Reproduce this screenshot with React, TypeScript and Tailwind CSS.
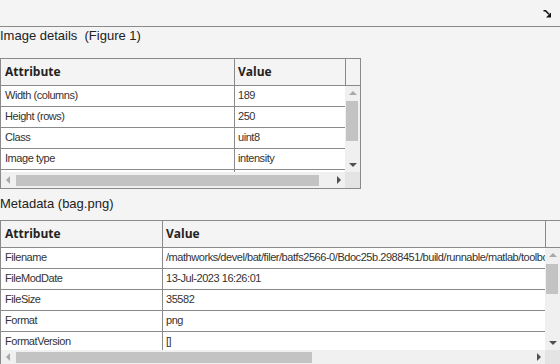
import React from 'react';

const font = { fontFamily: '"Liberation Sans", Arial, sans-serif' };
const headFont = { fontFamily: '"Open Sans", "Noto Sans", sans-serif' };

type Row = [string, string];

// last row of the first table only peeks out 3px under the header lines
const imageRows: Row[] = [
    ['Width (columns)', '189'],
    ['Height (rows)', '250'],
    ['Class', 'uint8'],
    ['Image type', 'intensity'],
    ['', ''],
];

const metaRows: Row[] = [
    ['Filename', '/mathworks/devel/bat/filer/batfs2566-0/Bdoc25b.2988451/build/runnable/matlab/toolbox/images/imdata/bag.png'],
    ['FileModDate', '13-Jul-2023 16:26:01'],
    ['FileSize', '35582'],
    ['Format', 'png'],
    ['FormatVersion', '[]'],
];

function UpArrow() {
    return <div className="w-0 h-0 border-l-[4px] border-r-[4px] border-b-[4px] border-l-transparent border-r-transparent border-b-[#a8a8a8]" />;
}
function DownArrow() {
    return <div className="w-0 h-0 border-l-[4px] border-r-[4px] border-t-[4px] border-l-transparent border-r-transparent border-t-[#505050]" />;
}
function LeftArrow() {
    return <div className="w-0 h-0 border-t-[4px] border-b-[4px] border-r-[4px] border-t-transparent border-b-transparent border-r-[#a8a8a8]" />;
}
function RightArrow() {
    return <div className="w-0 h-0 border-t-[4px] border-b-[4px] border-l-[4px] border-t-transparent border-b-transparent border-l-[#505050]" />;
}

function DataTable({
    rows, width, attrW, valueW, bodyH, thumbTop, thumbH, hThumbW, hBarH,
}: {
    rows: Row[]; width: string; attrW: string; valueW: string; bodyH: string;
    thumbTop: string; thumbH: string; hThumbW: string; hBarH: string;
}) {
    return (
        <div className={`${width} border border-[#8a8a8a] bg-[#f4f4f4] flex flex-col shrink-0`}>
            {/* header */}
            <div className="flex h-[27px] border-b border-[#8a8a8a] text-[12px] font-bold text-[#222]" style={headFont}>
                <div className={`${attrW} shrink-0 border-r border-[#8a8a8a] pl-1 pt-[5px] leading-[16px]`}>Attribute</div>
                <div className={`${valueW} shrink-0 border-r border-[#8a8a8a] pl-[3px] pt-[5px] leading-[16px]`}>Value</div>
                <div className="flex-1" />
            </div>
            {/* body */}
            <div className={`flex ${bodyH}`}>
                <div className="flex-1 overflow-hidden bg-[#f4f4f4]">
                    {rows.map(([a, v], i) => (
                        <div key={i} className="flex h-[21px] bg-white border-b border-[#8a8a8a] text-[11px] tracking-[-0.45px] text-[#333] leading-[18px]" style={font}>
                            <div className={`${attrW} shrink-0 border-r border-[#8a8a8a] pl-1 truncate`}>{a}</div>
                            <div className="flex-1 pl-[3px] whitespace-nowrap overflow-hidden">{v}</div>
                        </div>
                    ))}
                </div>
                <div className="w-[15px] shrink-0 bg-[#f0f0f0] relative flex flex-col items-center">
                    <div className="pt-[5px]"><UpArrow /></div>
                    <div className={`absolute left-[1px] w-[12px] ${thumbTop} ${thumbH} bg-[#c3c3c3]`} />
                    <div className="mt-auto pb-[5px]"><DownArrow /></div>
                </div>
            </div>
            {/* horizontal scrollbar */}
            <div className={`flex ${hBarH}`}>
                <div className="flex-1 bg-[#f0f0f0] flex items-center pl-[5px] pr-[4px]">
                    <LeftArrow />
                    <div className={`ml-[6px] h-[11px] ${hThumbW} bg-[#c3c3c3]`} />
                    <div className="ml-auto"><RightArrow /></div>
                </div>
                <div className="w-[15px] shrink-0 bg-[#e4e4e4]" />
            </div>
        </div>
    );
}

export default function App() {
    return (
        <div className="w-[560px] h-[364px] overflow-hidden bg-[#f4f4f4]" style={font}>
            <div className="h-[27px] border-b border-[#8a8a8a] flex items-start justify-end pr-[8px] pt-[10px]">
                <svg width="9" height="8" viewBox="0 0 9 8">
                    <path d="M0.5 0.8 L2.5 0.8 L6 4.3" stroke="#111" strokeWidth="1.6" fill="none" />
                    <path d="M8 2.5 L8 7.5 L3 7.5 Z" fill="#111" />
                </svg>
            </div>
            <div className="h-[31px] text-[13px] text-[#222] leading-[16px] pt-[1px]">Image details&nbsp; (Figure 1)</div>
            <DataTable
                rows={imageRows}
                width="w-[361px]"
                attrW="w-[234px]"
                valueW="w-[111px]"
                bodyH="h-[86px]"
                thumbTop="top-[15px]"
                thumbH="h-[40px]"
                hThumbW="w-[303px]"
                hBarH="h-[16px]"
            />
            <div className="h-[31px] text-[13px] text-[#222] leading-[16px] pt-[7px]">Metadata (bag.png)</div>
            <DataTable
                rows={metaRows}
                width="w-[561px]"
                attrW="w-[162px]"
                valueW="w-[383px]"
                bodyH="h-[102px]"
                thumbTop="top-[16px]"
                thumbH="h-[30px]"
                hThumbW="w-[296px]"
                hBarH="h-[14px]"
            />
        </div>
    );
}
